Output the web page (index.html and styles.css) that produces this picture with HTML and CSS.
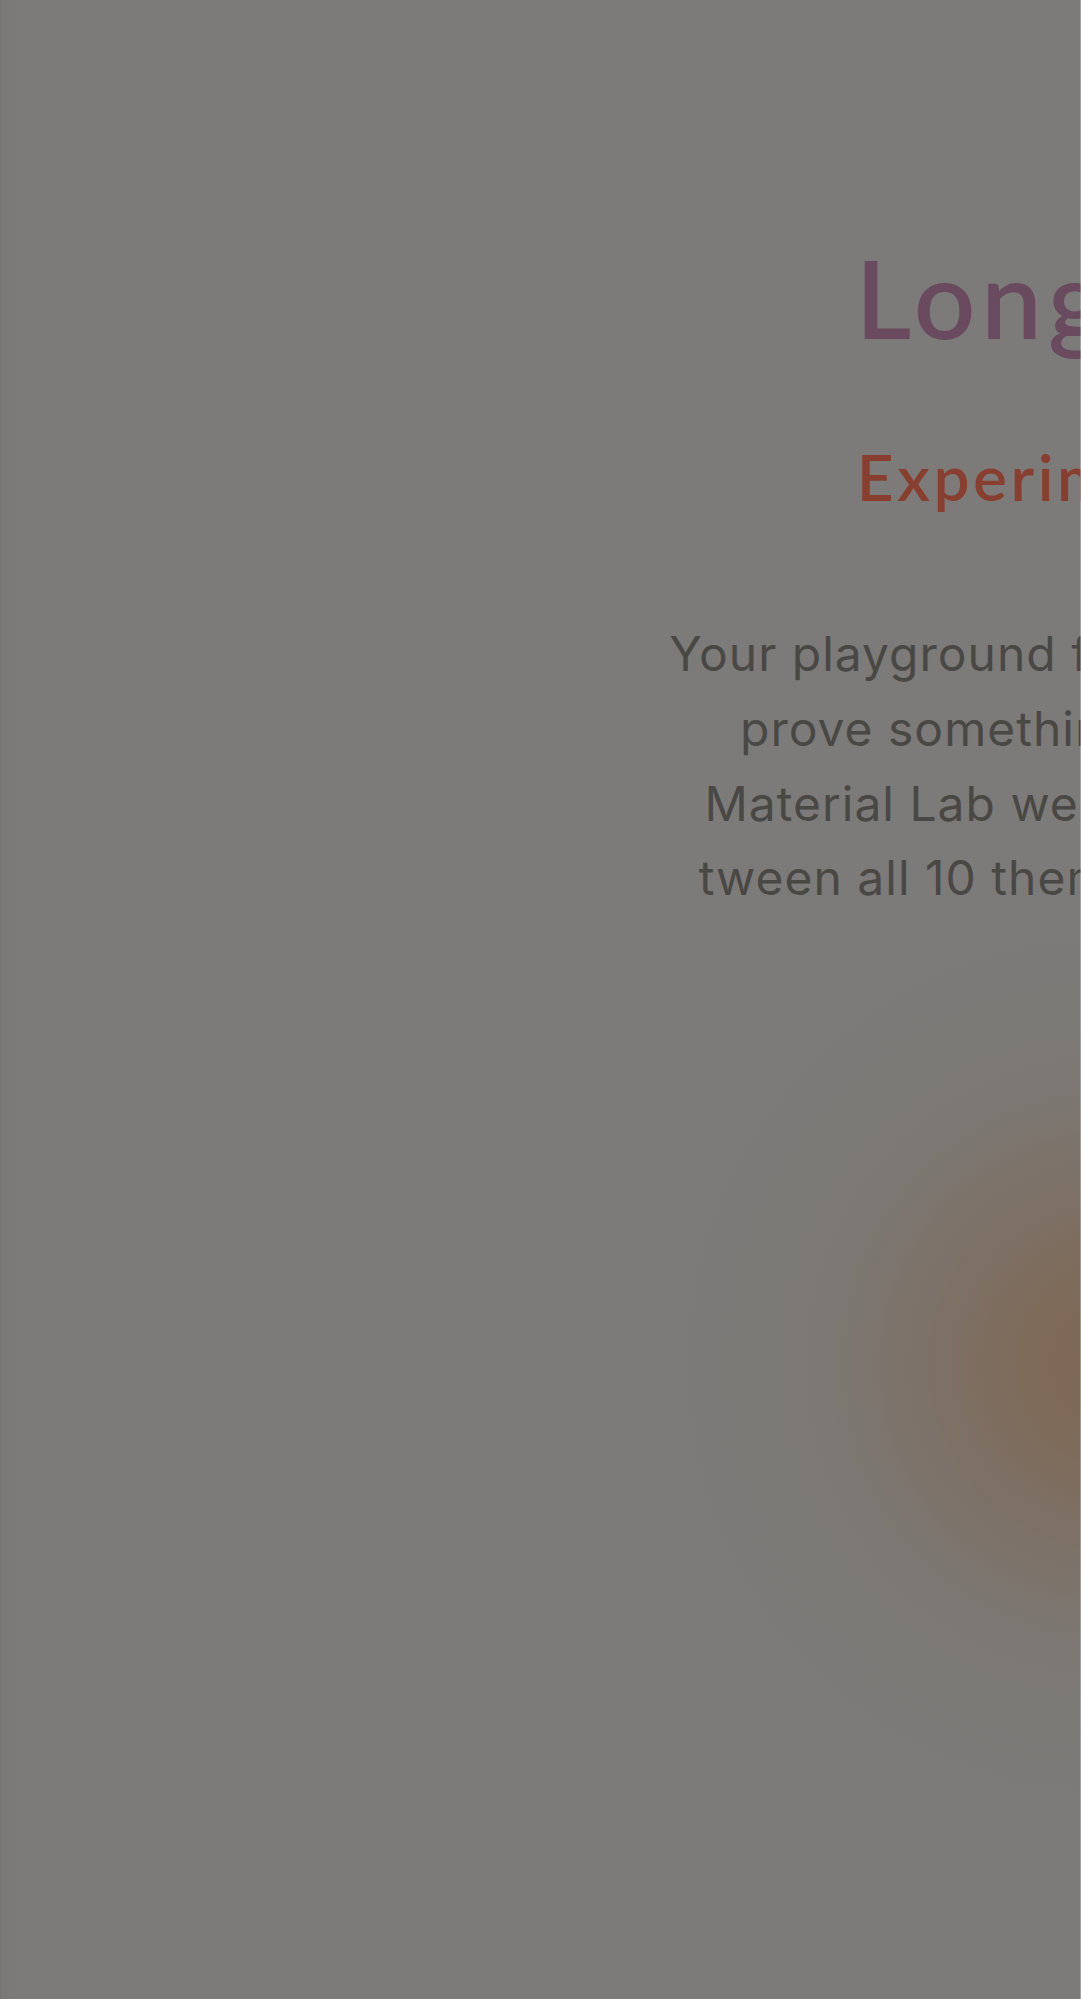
FILE: index.html
```html
<!DOCTYPE html>
<html lang="en">
<head>
<meta charset="utf-8">
<title>Long Read</title>
<link rel="stylesheet" href="styles.css">
</head>
<body>
<div class="page">
  <div class="blob"></div>
  <main class="hero">
    <h1 class="title">Long Read</h1>
    <h2 class="subtitle">Experimental Lab</h2>
    <p class="lead">
      <span class="line">Your playground for long pages. Scroll,</span>
      <span class="line">prove something works, at scale.</span>
      <span class="line">Material Lab website and toggle be-</span>
      <span class="line">tween all 10 themes while you scroll.</span>
    </p>
  </main>
  <div class="edge-left"></div>
  <div class="edge-right"></div>
</div>
</body>
</html>
```

FILE: styles.css
```css
html, body {
  margin: 0;
  padding: 0;
}
body {
  width: 1081px;
  height: 1999px;
  overflow: hidden;
  background: #7c7b79;
}
.page {
  position: relative;
  width: 1081px;
  height: 1999px;
  overflow: hidden;
  background: #7c7b79;
}
.blob {
  position: absolute;
  left: 665px;
  top: 915px;
  width: 900px;
  height: 900px;
  border-radius: 50%;
  background: radial-gradient(closest-side, rgb(127, 104, 84) 0%, rgb(126, 106, 88) 18%, rgba(125, 110, 98, 0.75) 42%, rgba(124, 118, 112, 0.35) 70%, rgba(124, 123, 121, 0) 100%);
}
.hero {
  position: relative;
  width: 2260px;
  display: flex;
  flex-direction: column;
  align-items: center;
  text-align: center;
  padding-top: 232.7px;
}
.title {
  margin: 0;
  font-family: "Lato", sans-serif;
  font-weight: 600;
  font-size: 108px;
  line-height: 1.2;
  letter-spacing: 0.055em;
  color: #694a5f;
  white-space: nowrap;
}
.subtitle {
  margin: 76.5px 0 0;
  font-family: "Lato", sans-serif;
  font-weight: 600;
  font-size: 64px;
  line-height: 1.2;
  letter-spacing: 0.055em;
  color: #893f30;
  white-space: nowrap;
}
.lead {
  margin: 101.6px 0 0;
  font-family: "Inter", sans-serif;
  font-weight: 400;
  font-size: 48px;
  line-height: 74.7px;
  letter-spacing: 1px;
  color: #4a4845;
  display: flex;
  flex-direction: column;
  align-items: center;
}
.line {
  display: block;
  white-space: nowrap;
}
.edge-left {
  position: absolute;
  left: 0;
  top: 0;
  width: 18px;
  height: 100%;
  background: linear-gradient(to right, rgba(0,0,0,0.05) 0, rgba(0,0,0,0.05) 1px, rgba(0,0,0,0.02) 2px, rgba(0,0,0,0) 18px);
}
.edge-right {
  position: absolute;
  right: 0;
  top: 0;
  width: 1px;
  height: 100%;
  background: rgba(255,255,255,0.3);
}
```
